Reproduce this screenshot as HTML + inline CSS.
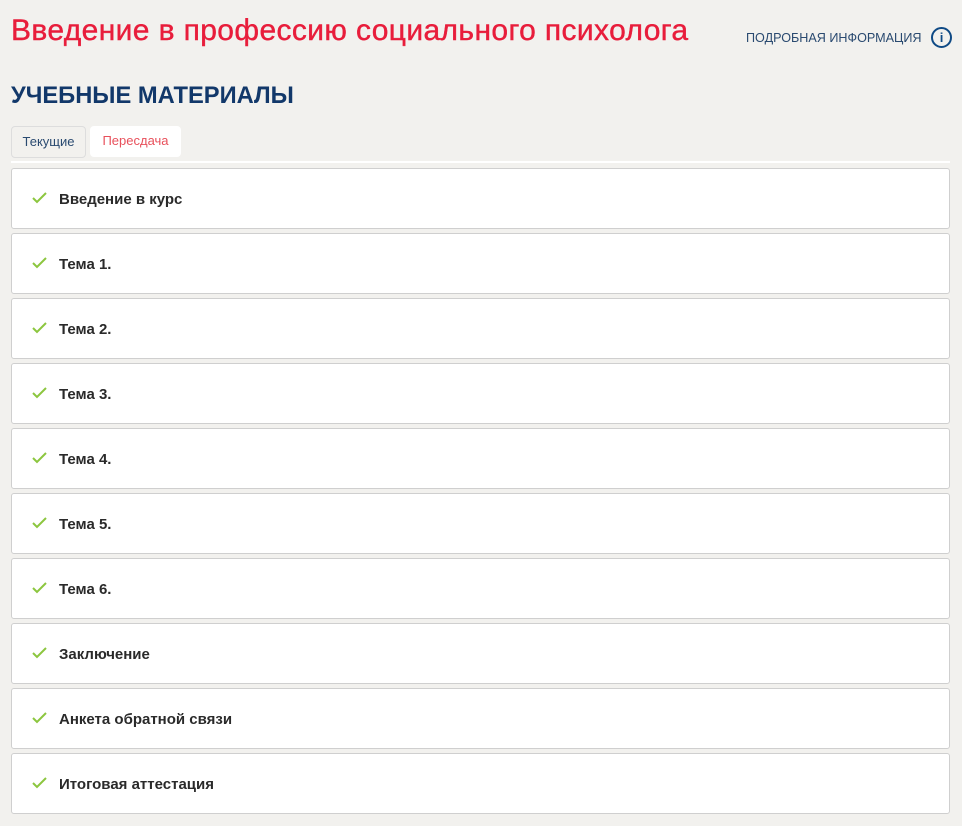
<!DOCTYPE html>
<html><head><meta charset="utf-8"><style>
body{margin:0;background:#f2f1ee;font-family:"Liberation Sans","DejaVu Sans",sans-serif;width:962px;height:826px;overflow:hidden;position:relative}
.t{position:absolute;left:11px;top:14px;color:#e81d3b;font-size:30px;letter-spacing:0.38px;-webkit-text-stroke:0.4px #e81d3b}
.info{position:absolute;left:746px;top:31px;color:#2a4a70;font-size:12.6px}
.ic{position:absolute;left:931px;top:27px;width:17px;height:17px;border:2px solid #0f4a85;border-radius:50%;color:#0f4a85;font-size:13px;font-weight:bold;text-align:center;line-height:17px}
.h{position:absolute;left:11px;top:83px;color:#12386a;font-size:23.7px;font-weight:bold}
.tab{position:absolute;top:126px;height:30px;line-height:30px;font-size:13px;border-radius:4px;text-align:center}
.line{position:absolute;left:11px;top:161px;width:939px;height:2px;background:#fff}
.it{position:absolute;left:11px;width:937px;height:59px;background:#fff;border:1px solid #cfcfcf;border-radius:3px}
.it span{position:absolute;left:47px;top:22px;font-size:15px;font-weight:bold;color:#2a2a2a}
.it svg{position:absolute;left:20px;top:23px}
</style></head><body>
<div class="t">Введение в профессию социального психолога</div>
<div class="info">ПОДРОБНАЯ ИНФОРМАЦИЯ</div>
<div class="ic">i</div>
<div class="h">УЧЕБНЫЕ МАТЕРИАЛЫ</div>
<div class="tab" style="left:11px;width:73px;border:1px solid #ddd;color:#2a4a70">Текущие</div>
<div class="tab" style="left:90px;width:91px;background:#fff;color:#e8505b;height:31px">Пересдача</div>
<div class="line"></div>
<div class="it" style="top:168px"><svg width="15" height="12"><path d="M1 6l4 4 9-9" stroke="#8cc63f" stroke-width="2" fill="none"/></svg><span>Введение в курс</span></div>
<div class="it" style="top:233px"><svg width="15" height="12"><path d="M1 6l4 4 9-9" stroke="#8cc63f" stroke-width="2" fill="none"/></svg><span>Тема 1.</span></div>
<div class="it" style="top:298px"><svg width="15" height="12"><path d="M1 6l4 4 9-9" stroke="#8cc63f" stroke-width="2" fill="none"/></svg><span>Тема 2.</span></div>
<div class="it" style="top:363px"><svg width="15" height="12"><path d="M1 6l4 4 9-9" stroke="#8cc63f" stroke-width="2" fill="none"/></svg><span>Тема 3.</span></div>
<div class="it" style="top:428px"><svg width="15" height="12"><path d="M1 6l4 4 9-9" stroke="#8cc63f" stroke-width="2" fill="none"/></svg><span>Тема 4.</span></div>
<div class="it" style="top:493px"><svg width="15" height="12"><path d="M1 6l4 4 9-9" stroke="#8cc63f" stroke-width="2" fill="none"/></svg><span>Тема 5.</span></div>
<div class="it" style="top:558px"><svg width="15" height="12"><path d="M1 6l4 4 9-9" stroke="#8cc63f" stroke-width="2" fill="none"/></svg><span>Тема 6.</span></div>
<div class="it" style="top:623px"><svg width="15" height="12"><path d="M1 6l4 4 9-9" stroke="#8cc63f" stroke-width="2" fill="none"/></svg><span>Заключение</span></div>
<div class="it" style="top:688px"><svg width="15" height="12"><path d="M1 6l4 4 9-9" stroke="#8cc63f" stroke-width="2" fill="none"/></svg><span>Анкета обратной связи</span></div>
<div class="it" style="top:753px"><svg width="15" height="12"><path d="M1 6l4 4 9-9" stroke="#8cc63f" stroke-width="2" fill="none"/></svg><span>Итоговая аттестация</span></div>
</body></html>
